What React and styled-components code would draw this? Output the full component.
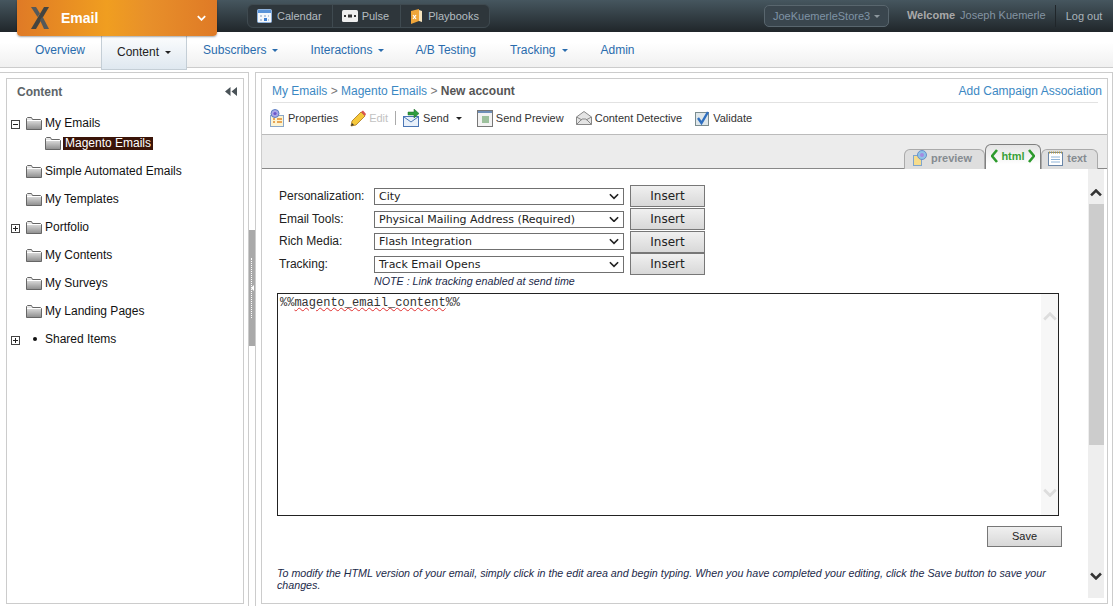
import React from "react";
import styled, { createGlobalStyle } from "styled-components";

const GlobalStyle = createGlobalStyle`
  html, body { margin: 0; padding: 0; background: #fff; }
  body { font-family: "Liberation Sans", Arial, sans-serif; font-size: 12px; color: #222; }
  * { box-sizing: border-box; }
`;

const Page = styled.div`
  width: 1113px;
  height: 606px;
  overflow: hidden;
  display: flex;
  flex-direction: column;
`;

/* top dark bar */
const TopBar = styled.div`
  height: 32px;
  flex: none;
  display: flex;
  align-items: flex-start;
  padding-left: 17px;
  background: linear-gradient(#46565f, #20262a);
  position: relative;
  z-index: 3;
`;
const AppTab = styled.div`
  width: 200px;
  height: 36px;
  display: flex;
  align-items: center;
  padding: 0 11px 0 12px;
  border-radius: 0 0 4px 4px;
  background: linear-gradient(90deg, #df7a26, #f09e20 45%, #e8902a 65%, #df7a26);
  box-shadow: 0 1px 2px rgba(0, 0, 0, 0.35);
  color: #fff;
  font-size: 14px;
  font-weight: bold;
`;
const AppName = styled.span`
  margin-left: 10px;
  flex: 1;
`;
const QuickLinks = styled.div`
  margin: 4px 0 0 30px;
  height: 24px;
  display: flex;
  border: 1px solid #3f4a50;
  border-radius: 6px;
  background: #2e363b;
`;
const QuickLink = styled.div`
  display: flex;
  align-items: center;
  gap: ${(p) => p.$gap || 5}px;
  padding: 0 ${(p) => p.$pr || 10}px 0 9px;
  color: #b4bcc0;
  font-size: 11px;
  & + & { border-left: 1px solid #3f4a50; }
`;
const StoreSelect = styled.div`
  margin: 5px 0 0 274px;
  width: 125px;
  height: 22px;
  display: flex;
  align-items: center;
  justify-content: space-between;
  padding: 0 8px;
  border: 1px solid #59666e;
  border-radius: 5px;
  background: #3a464e;
  color: #7f93a5;
  font-size: 11px;
`;
const SmallCaret = styled.span`
  width: 0;
  height: 0;
  border-left: 3px solid transparent;
  border-right: 3px solid transparent;
  border-top: 3px solid ${(p) => p.$color || "#8d979e"};
  display: inline-block;
  margin-left: ${(p) => p.$ml || 0}px;
`;
const Welcome = styled.div`
  margin: 9px 0 0 18px;
  font-size: 11px;
  font-weight: bold;
  color: #a9a9a9;
  white-space: nowrap;
`;
const UserName = styled.span`
  font-weight: normal;
  color: #8494a2;
  margin-left: 5px;
`;
const LogOut = styled.div`
  margin: 5px 0 0 9px;
  height: 22px;
  padding: 5px 0 0 10px;
  border-left: 1px solid #20262a;
  color: #aab4bb;
  font-size: 11px;
  white-space: nowrap;
`;

/* second nav */
const NavBar = styled.div`
  height: 36px;
  flex: none;
  display: flex;
  padding-left: 19px;
  background: linear-gradient(#fff 30%, #f0f0f0);
  border-bottom: 1px solid #ccc;
`;
const NavItem = styled.div`
  height: ${(p) => (p.$active ? "38px" : "auto")};
  padding: ${(p) => (p.$active ? "13px 15px 0" : "11px 16px 0")};
  margin-left: ${(p) => p.$gap || 0}px;
  font-size: 12px;
  white-space: nowrap;
  color: ${(p) => (p.$active ? "#222" : "#2a6cad")};
  ${(p) =>
    p.$active &&
    `background: linear-gradient(#fff, #dfe8f0);
     border: 1px solid #c4ced6;
     border-top: none;
     position: relative;
     z-index: 1;`}
`;
const NavCaret = styled.span`
  display: inline-block;
  width: 0;
  height: 0;
  margin-left: 6px;
  vertical-align: 2px;
  border-left: 3px solid transparent;
  border-right: 3px solid transparent;
  border-top: 3px solid ${(p) => (p.$active ? "#222" : "#2a6cad")};
`;

/* work area */
const Work = styled.div`
  flex: 1;
  display: flex;
  min-height: 0;
  padding-top: 4px;
`;
const OuterLeft = styled.div`
  width: 249px;
  flex: none;
  padding: 5px 4px 2px 6px;
  border: 1px solid #ccc;
  border-left: none;
  border-bottom: none;
`;
const SidePanel = styled.div`
  height: 100%;
  border: 1px solid #ccc;
  padding: 0 10px;
`;
const SideHead = styled.div`
  height: 25px;
  display: flex;
  align-items: center;
  justify-content: space-between;
  color: #5d6468;
  font-size: 12px;
  font-weight: bold;
`;
const CollapseButton = styled.span`
  display: flex;
  margin-right: -4px;
`;
const TreeRow = styled.div`
  height: ${(p) => p.$h || 28}px;
  display: flex;
  align-items: center;
  margin-left: -4px;
  margin-top: ${(p) => (p.$pad ? 4 : 0)}px;
  padding-left: ${(p) => (p.$child ? 32 : 13)}px;
  position: relative;
  color: #111;
  white-space: nowrap;
`;
const Toggle = styled.span`
  position: absolute;
  left: -2px;
  top: 50%;
  margin-top: -3px;
  width: 9px;
  height: 9px;
  border: 1px solid #444;
  background: #fff;
  &::before {
    content: "";
    position: absolute;
    left: 1px;
    top: 3px;
    width: 5px;
    height: 1px;
    background: #222;
  }
  ${(p) =>
    p.$plus &&
    `&::after {
      content: "";
      position: absolute;
      left: 3px;
      top: 1px;
      width: 1px;
      height: 5px;
      background: #222;
    }`}
`;
const TreeLabel = styled.span`
  margin-left: ${(p) => (p.$selected ? "2px" : "3px")};
  ${(p) => p.$selected && "background: #3a1408; color: #fff; padding: 0 2px; line-height: 13px;"}
`;
const Bullet = styled.span`
  width: 4px;
  height: 4px;
  margin: 0 5px 0 7px;
  border-radius: 50%;
  background: #111;
`;
const Splitter = styled.div`
  width: 6px;
  flex: none;
  display: flex;
  align-items: flex-start;
  padding-top: 158px;
`;
const SplitHandle = styled.div`
  width: 6px;
  height: 116px;
  background: #a9a9a9;
  display: flex;
  align-items: center;
  justify-content: center;
  position: relative;
  &::before {
    content: "";
    position: absolute;
    left: 2px;
    top: 28px;
    height: 60px;
    border-left: 1px dotted #fff;
  }
  &::after {
    content: "";
    width: 0;
    height: 0;
    border-top: 3px solid transparent;
    border-bottom: 3px solid transparent;
    border-right: 3px solid #fff;
    position: relative;
  }
`;
const OuterRight = styled.div`
  flex: 1;
  padding: 5px 4px 2px 5px;
  border: 1px solid #ccc;
  border-bottom: none;
`;
const MainPanel = styled.div`
  height: 100%;
  border: 1px solid #ccc;
  display: flex;
  flex-direction: column;
`;
const Crumbs = styled.div`
  margin: 0 9px 0 10px;
  height: 24px;
  flex: none;
  display: flex;
  justify-content: space-between;
  align-items: center;
  border-bottom: 1px solid #e2e2e2;
  color: #3b88c3;
  font-size: 12px;
`;
const CrumbSep = styled.span`
  color: #777;
`;
const CrumbNow = styled.b`
  color: #555;
`;
const AddLink = styled.span`
  margin-right: -4px;
`;
const ToolBar = styled.div`
  height: 32px;
  flex: none;
  display: flex;
  align-items: center;
  padding: 0 0 1px 6px;
  border-bottom: 1px solid #bbb;
  font-size: 11px;
  color: #333;
`;
const Tool = styled.div`
  display: flex;
  align-items: center;
  gap: 3px;
  margin-right: ${(p) => p.$mr ?? 12}px;
  color: ${(p) => (p.$disabled ? "#c2c2c2" : "#333")};
`;
const ToolSep = styled.span`
  width: 1px;
  height: 14px;
  background: #aaa;
  margin-right: 7px;
`;
const TabStrip = styled.div`
  height: 34px;
  flex: none;
  display: flex;
  justify-content: flex-end;
  align-items: flex-end;
  padding-right: 9px;
  background: #ececec;
  border-bottom: 1px solid #888;
`;
const Tab = styled.div`
  display: flex;
  align-items: center;
  justify-content: center;
  gap: ${(p) => p.$gap}px;
  width: ${(p) => p.$w}px;
  height: ${(p) => (p.$active ? 25 : 20)}px;
  margin-bottom: -1px;
  padding: 0 ${(p) => (p.$active ? 0 : 4)}px 3px 0;
  border: 1px solid #aaa;
  border-bottom: none;
  border-radius: 6px 6px 0 0;
  font-size: 11px;
  font-weight: bold;
  color: ${(p) => (p.$active ? "#3aa13a" : "#858b90")};
  background: ${(p) => (p.$active ? "linear-gradient(#e4e4e4, #fff 80%)" : "#dedede")};
  ${(p) => p.$active && "border-color: #808080;"}
`;
const Body = styled.div`
  flex: 1;
  display: flex;
  min-height: 0;
`;
const FormArea = styled.div`
  flex: 1;
  padding: 16px 0 0 15px;
  min-width: 0;
`;
const FieldRow = styled.div`
  height: 22.7px;
  display: flex;
  align-items: center;
`;
const FieldLabel = styled.div`
  width: 97px;
  padding-left: 2px;
  color: #222;
  font-size: 12px;
  margin-top: -1px;
`;
const FakeSelect = styled.div`
  width: 250px;
  height: 17px;
  display: flex;
  align-items: center;
  justify-content: space-between;
  padding: 0 4px;
  border: 1px solid #707070;
  background: #fff;
  font-family: "DejaVu Sans", Verdana, sans-serif;
  font-size: 11px;
  color: #222;
`;
const GreyButton = styled.div`
  width: ${(p) => p.$w || 75}px;
  height: ${(p) => p.$h || 22}px;
  margin-left: ${(p) => p.$ml || 0}px;
  display: flex;
  align-items: center;
  justify-content: center;
  border: 1px solid #777;
  background: linear-gradient(#f0f0f0, #d8d8d8);
  font-family: ${(p) => p.$font || '"DejaVu Sans", Verdana, sans-serif'};
  font-size: ${(p) => p.$size || 12}px;
  color: #222;
`;
const Note = styled.div`
  margin: -1px 0 0 97px;
  height: 15px;
  font-size: 10.7px;
  font-style: italic;
  color: #1c2a4a;
`;
const EditBox = styled.div`
  width: 782px;
  height: 223px;
  margin-top: 3px;
  display: flex;
  border: 1px solid #222;
`;
const EditText = styled.div`
  flex: 1;
  padding: 2px 2px;
  font-family: "Liberation Mono", "Courier New", monospace;
  font-size: 12px;
  color: #333;
`;
const Misspelt = styled.span`
  text-decoration: underline wavy #e03030 1px;
`;
const EditScroll = styled.div`
  width: 17px;
  background: #f7f7f7;
  display: flex;
  flex-direction: column;
  justify-content: space-between;
  align-items: center;
  padding: 18px 0;
`;
const SaveRow = styled.div`
  width: 785px;
  display: flex;
  justify-content: flex-end;
  margin-top: 10px;
`;
const HelpText = styled.div`
  width: 800px;
  margin-top: 20px;
  font-size: 10.7px;
  font-style: italic;
  line-height: 12.5px;
  color: #1c2a4a;
`;
const ScrollTrack = styled.div`
  width: 16px;
  flex: none;
  margin: 0 3px 5px 0;
  background: #eee;
  display: flex;
  flex-direction: column;
  align-items: center;
  padding-top: 20px;
`;
const ScrollThumb = styled.div`
  width: 15px;
  height: 241px;
  margin-top: 7px;
  background: #ccc;
`;
const ScrollEnd = styled.div`
  margin-top: 124px;
`;

/* ---- drawings ---- */
const LogoX = () => (
  <svg width="22" height="24" viewBox="0 0 22 24">
    <path d="M2 1h5l4 6.500-2.500 3.500z" fill="#55595a" />
    <path d="M20 1h-5L2 23h5z" fill="#444440" />
    <path d="M11 14l2.500-3.500L20 23h-5z" fill="#55595a" />
  </svg>
);

const Chevron = ({ dir = "down", color = "#333", w = 12, sw = 2.4 }) => (
  <svg width={w} height={w * 0.66} viewBox="0 0 12 8">
    <path
      d={dir === "down" ? "M1 1.500l5 5 5-5" : "M1 6.500l5-5 5 5"}
      fill="none"
      stroke={color}
      strokeWidth={sw}
    />
  </svg>
);

const Folder = () => (
  <svg width="16" height="13" viewBox="0 0 16 13">
    <defs>
      <linearGradient id="fold" x1="0" y1="0" x2="0" y2="1">
        <stop offset="0" stopColor="#f4f4f4" />
        <stop offset="1" stopColor="#8d8d8d" />
      </linearGradient>
    </defs>
    <path d="M.5 12.500v-11l1-1h4l1 2h8l1 1v9z" fill="url(#fold)" stroke="#666" />
    <path d="M1 3.500h14" stroke="#fff" />
  </svg>
);

const CalendarIcon = () => (
  <svg width="15" height="14" viewBox="0 0 15 14">
    <rect x=".5" y=".5" width="14" height="13" rx="1" fill="#f4f7fb" stroke="#8fb2dd" />
    <rect x="1" y="1" width="13" height="3" fill="#5a93d8" />
    <path d="M3 6h2v2H3zM7 6h2v2H7zM11 6h1v2h-1zM3 10h2v2H3zM11 10h1v2h-1z" fill="#b9c9de" />
    <rect x="7" y="9" width="3" height="3" fill="#3f7fd0" />
  </svg>
);
const PulseIcon = () => (
  <svg width="16" height="12" viewBox="0 0 16 12">
    <rect width="16" height="12" rx="1.500" fill="#eeeeee" />
    <rect x="2" y="5" width="2" height="2" fill="#333" />
    <rect x="6" y="4.500" width="4" height="3" fill="#333" />
    <rect x="12" y="5" width="2" height="2" fill="#333" />
  </svg>
);
const BookIcon = () => (
  <svg width="13" height="15" viewBox="0 0 13 15">
    <path d="M1 2l8-2v12l-8 3z" fill="#f0a63a" />
    <path d="M9 1l3 1v11l-3-1z" fill="#f6e3bd" />
    <path d="M3 6l3 4M6 6l-3 4" stroke="#fff" strokeWidth="1.2" />
  </svg>
);
const PropsIcon = () => (
  <svg width="17" height="18" viewBox="0 0 17 18">
    <rect x="2.500" y="6.500" width="13" height="11" fill="#fdf4d2" stroke="#8aa7c9" />
    <path d="M5 10h2M9 10h5M5 13h2M9 13h5" stroke="#e08a2c" strokeWidth="1.4" />
    <circle cx="7" cy="4.500" r="4" fill="#a9a6e8" stroke="#5a7fc2" />
    <circle cx="7" cy="4.500" r="1.600" fill="#6a55c8" />
  </svg>
);
const PencilIcon = () => (
  <svg width="16" height="17" viewBox="0 0 16 17">
    <path d="M1 16l1-5L11 2l4 4-9 9z" fill="#f6c83a" stroke="#a8761a" strokeWidth=".8" />
    <path d="M11 2l2-1.500L16 4l-1 2z" fill="#d9534f" />
    <path d="M1 16l1-3 2 2z" fill="#333" />
  </svg>
);
const SendIcon = () => (
  <svg width="17" height="18" viewBox="0 0 17 18">
    <rect x=".5" y="7.500" width="15" height="10" fill="#e8f0fa" stroke="#4a76b5" />
    <path d="M1 8l7 5 7-5" fill="none" stroke="#4a76b5" />
    <path d="M5 3h6V0l5 4.500-5 4.500V6H5z" fill="#2f9e3f" stroke="#1d6b2a" strokeWidth=".5" />
  </svg>
);
const PreviewWinIcon = () => (
  <svg width="16" height="17" viewBox="0 0 16 17">
    <rect x=".5" y=".5" width="15" height="16" fill="#f2f2f2" stroke="#777" />
    <rect x="1" y="1" width="14" height="2" fill="#6f8fb8" />
    <rect x="5" y="6" width="7" height="7" fill="#9cc09c" />
  </svg>
);
const EnvelopeIcon = () => (
  <svg width="16" height="14" viewBox="0 0 16 14">
    <path d="M.5 6L8 .5 15.500 6v7.500H.5z" fill="#e4e4e4" stroke="#888" />
    <path d="M.5 13.500L6 8h4l5.500 5.500M.5 6L6 9M15.500 6L10 9" fill="none" stroke="#888" />
  </svg>
);
const ValidateIcon = () => (
  <svg width="15" height="15" viewBox="0 0 15 15">
    <rect x=".5" y="1.500" width="13" height="13" fill="#dfe7ea" stroke="#7b8c8f" />
    <path d="M3 7l3.500 5L13 1" fill="none" stroke="#2f6fc0" strokeWidth="2.400" />
  </svg>
);
const PreviewTabIcon = () => (
  <svg width="15" height="16" viewBox="0 0 15 16">
    <rect x=".5" y="5.500" width="8" height="10" fill="#f6dc8c" stroke="#7fa5cc" />
    <circle cx="9" cy="5" r="4.500" fill="#8fc3e8" stroke="#6a8fc8" />
    <circle cx="9" cy="5" r="2" fill="#a58be0" />
  </svg>
);
const Bracket = ({ right }) => (
  <svg width="7" height="14" viewBox="0 0 7 14">
    <path
      d={right ? "M1 1l5 6-5 6" : "M6 1L1 7l5 6"}
      fill="none"
      stroke="#2c9a2c"
      strokeWidth="2.600"
    />
  </svg>
);
const NotepadIcon = () => (
  <svg width="15" height="15" viewBox="0 0 15 15">
    <rect x=".5" y="1.500" width="14" height="13" fill="#fff" stroke="#6a86a8" />
    <path d="M1 1.500h13" stroke="#b09a4a" strokeWidth="2" strokeDasharray="1 1" />
    <path d="M3 6h9M3 8.500h9M3 11h9" stroke="#8fb4d8" />
  </svg>
);
const DoubleLeft = () => (
  <svg width="12" height="9" viewBox="0 0 12 9">
    <path d="M5.500 0v9L0 4.500zM12 0v9L6.500 4.500z" fill="#4a5358" />
  </svg>
);

const tree = [
  { label: "My Emails", toggle: "minus", h: 20 },
  { label: "Magento Emails", child: true, selected: true, h: 20 },
  { label: "Simple Automated Emails", pad: true },
  { label: "My Templates" },
  { label: "Portfolio", toggle: "plus" },
  { label: "My Contents" },
  { label: "My Surveys" },
  { label: "My Landing Pages" },
  { label: "Shared Items", toggle: "plus", bullet: true },
];

const fields = [
  ["Personalization:", "City"],
  ["Email Tools:", "Physical Mailing Address (Required)"],
  ["Rich Media:", "Flash Integration"],
  ["Tracking:", "Track Email Opens"],
];

export default function App() {
  return (
    <Page>
      <GlobalStyle />
      <TopBar>
        <AppTab>
          <LogoX />
          <AppName>Email</AppName>
          <Chevron color="#fff" w={9} sw={2.4} />
        </AppTab>
        <QuickLinks>
          <QuickLink><CalendarIcon />Calendar</QuickLink>
          <QuickLink $gap={4} $pr={11}><PulseIcon />Pulse</QuickLink>
          <QuickLink><BookIcon />Playbooks</QuickLink>
        </QuickLinks>
        <StoreSelect>JoeKuemerleStore3<SmallCaret /></StoreSelect>
        <Welcome>Welcome<UserName>Joseph Kuemerle</UserName></Welcome>
        <LogOut>Log out</LogOut>
      </TopBar>

      <NavBar>
        <NavItem>Overview</NavItem>
        <NavItem $active>Content<NavCaret $active /></NavItem>
        <NavItem>Subscribers<NavCaret /></NavItem>
        <NavItem>Interactions<NavCaret /></NavItem>
        <NavItem $gap={-1}>A/B Testing</NavItem>
        <NavItem $gap={2}>Tracking<NavCaret /></NavItem>
        <NavItem $gap={1}>Admin</NavItem>
      </NavBar>

      <Work>
        <OuterLeft>
          <SidePanel>
            <SideHead>Content<CollapseButton><DoubleLeft /></CollapseButton></SideHead>
            <TreeRow $h={9} />
            {tree.map((t) => (
              <TreeRow key={t.label} $child={t.child} $h={t.h} $pad={t.pad}>
                {t.toggle && <Toggle $plus={t.toggle === "plus"} />}
                {t.bullet ? <Bullet /> : <Folder />}
                <TreeLabel $selected={t.selected}>{t.label}</TreeLabel>
              </TreeRow>
            ))}
          </SidePanel>
        </OuterLeft>
        <Splitter><SplitHandle /></Splitter>
        <OuterRight>
          <MainPanel>
            <Crumbs>
              <span>
                My Emails <CrumbSep>&gt;</CrumbSep> Magento Emails <CrumbSep>&gt;</CrumbSep>{" "}
                <CrumbNow>New account</CrumbNow>
              </span>
              <AddLink>Add Campaign Association</AddLink>
            </Crumbs>
            <ToolBar>
              <Tool><PropsIcon />Properties</Tool>
              <Tool $disabled $mr={7}><PencilIcon />Edit</Tool>
              <ToolSep />
              <Tool $mr={15}>
                <SendIcon />Send
                <SmallCaret $color="#222" $ml={4} />
              </Tool>
              <Tool><PreviewWinIcon />Send Preview</Tool>
              <Tool $mr={13}><EnvelopeIcon />Content Detective</Tool>
              <Tool><ValidateIcon />Validate</Tool>
            </ToolBar>
            <TabStrip>
              <Tab $w={81} $gap={3}><PreviewTabIcon />preview</Tab>
              <Tab $active $w={56} $gap={3}><Bracket />html<Bracket right /></Tab>
              <Tab $w={57} $gap={4}><NotepadIcon />text</Tab>
            </TabStrip>
            <Body>
              <FormArea>
                {fields.map(([label, value]) => (
                  <FieldRow key={label}>
                    <FieldLabel>{label}</FieldLabel>
                    <FakeSelect>
                      {value}
                      <Chevron w={10} sw={2} color="#222" />
                    </FakeSelect>
                    <GreyButton $ml={6}>Insert</GreyButton>
                  </FieldRow>
                ))}
                <Note>NOTE : Link tracking enabled at send time</Note>
                <EditBox>
                  <EditText>%%<Misspelt>magento_email_content</Misspelt>%%</EditText>
                  <EditScroll>
                    <Chevron dir="up" color="#ddd" w={14} sw={2.4} />
                    <Chevron color="#ddd" w={14} sw={2.4} />
                  </EditScroll>
                </EditBox>
                <SaveRow>
                  <GreyButton $font='"Liberation Sans", Arial, sans-serif' $size={11} $h={21}>Save</GreyButton>
                </SaveRow>
                <HelpText>
                  To modify the HTML version of your email, simply click in the edit area and begin typing. When you have completed your editing, click the Save button to save your changes.
                </HelpText>
              </FormArea>
              <ScrollTrack>
                <Chevron dir="up" w={12} sw={2.6} color="#333" />
                <ScrollThumb />
                <ScrollEnd><Chevron w={12} sw={2.6} color="#333" /></ScrollEnd>
              </ScrollTrack>
            </Body>
          </MainPanel>
        </OuterRight>
      </Work>
    </Page>
  );
}
